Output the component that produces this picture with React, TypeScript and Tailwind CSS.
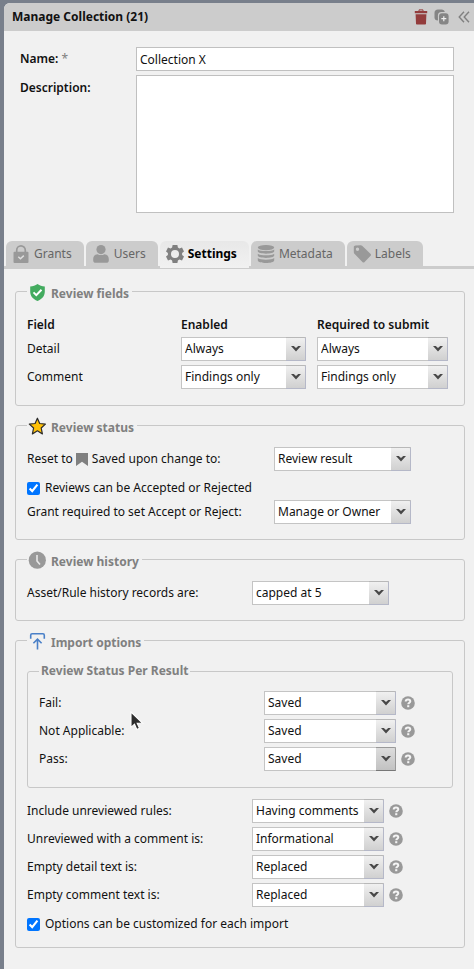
import { useId } from "react";
import type { ReactNode } from "react";

function HelpIcon() {
  return (
    <button type="button" aria-label="Help" className="mb-px ml-[5px] block size-[14px] shrink-0">
      <svg viewBox="0 0 14 14" className="block size-[14px]">
        <circle cx="7" cy="7" r="6.8" fill="#999" />
        <path d="M4.7 5.400C4.700 4 5.700 3.400 7 3.400s2.300.7 2.300 1.900c0 1.500-2 1.500-2 3" fill="none" stroke="#f4f4f4" strokeWidth="2" />
        <rect x="6.200" y="9.200" width="2.100" height="2" fill="#f4f4f4" />
      </svg>
    </button>
  );
}

type ComboProps = { id?: string; label?: string; value: string; width: string; pressed?: boolean };

function Combo({ id, label, value, width, pressed }: ComboProps) {
  const trigger = pressed
    ? "border-[#999] border-b-[#777] from-[#dcdcdc] to-[#c2c2c2]"
    : "border-[#b5b8c8] border-t-[#b8b8b8] from-[#f0f0f0] to-[#d0d0d0]";
  return (
    <span className={`relative block h-6 shrink-0 ${width}`}>
      <select
        id={id}
        aria-label={label}
        defaultValue={value}
        className="block h-6 w-full appearance-none border border-[#c4c4c4] bg-white pr-5 pl-[3px] text-[12px] leading-[22px] text-[#111] outline-none"
      >
        <option>{value}</option>
      </select>
      <span
        className={`pointer-events-none absolute top-0 right-0 flex h-6 w-5 items-center justify-center rounded-tr-[2px] border-t border-r border-b bg-linear-to-b ${trigger}`}
      >
        <svg viewBox="0 0 10 6" className="h-[6px] w-[10px]">
          <path d="M0 0h2.8L5 2 7.2 0H10L5 5.4z" fill="#484848" />
        </svg>
      </span>
    </span>
  );
}

function Row({ label, help, ...combo }: { label: ReactNode; help?: boolean; labelWidth: string } & Omit<ComboProps, "label">) {
  const id = useId();
  const { labelWidth, ...rest } = combo;
  return (
    <div className="flex h-6 items-center">
      <label htmlFor={id} className={`flex shrink-0 items-center whitespace-nowrap ${labelWidth}`}>
        {label}
      </label>
      <Combo id={id} {...rest} />
      {help && <HelpIcon />}
    </div>
  );
}

function Check({ label }: { label: string }) {
  return (
    <label className="flex h-5 items-center gap-[5px]">
      <input type="checkbox" defaultChecked className="size-[13px] accent-[#0075ff]" />
      {label}
    </label>
  );
}

function Section({ title, icon, children }: { title: string; icon: ReactNode; children: ReactNode }) {
  return (
    <fieldset className="mb-2 min-w-0 rounded-[3px] border border-[#c8c8c8] px-[11px]">
      <legend className="px-px">
        <span className="flex h-[22px] items-center gap-[5px] pt-px pr-[2px] font-bold text-[#808080]">
          {icon}
          <span className="pt-1">{title}</span>
        </span>
      </legend>
      {children}
    </fieldset>
  );
}

const iconClass = "block size-[18px] shrink-0";

const LockIcon = (
  <svg viewBox="0 0 18 18" className={iconClass}>
    <path d="M4.7 8V5.2a4.3 4.3 0 0 1 8.6 0V8" fill="none" stroke="#999" strokeWidth="1.7" />
    <rect x="1.5" y="6.8" width="15" height="11.2" rx="1" fill="#999" />
    <path d="M6.3 11.8l2.1 2 3.4-3.2" fill="none" stroke="#ddd" strokeWidth="1.5" />
  </svg>
);
const UserIcon = (
  <svg viewBox="0 0 18 18" className={iconClass}>
    <circle cx="9" cy="4.6" r="4.6" fill="#999" />
    <path d="M1.2 14c0-3 1.8-4.6 4.4-4.8 2 1.2 4.8 1.2 6.8 0 2.6.2 4.400 1.800 4.400 4.800v1.500c0 1.500-1 2.300-2.400 2.300H3.600C2.200 17.800 1.200 17 1.200 15.500z" fill="#999" />
  </svg>
);
const GearIcon = (
  <svg viewBox="0 0 18 18" className={iconClass}>
    <path
      d="M6.600 0h4.800l.5 2.600 1.500.9L16 2.600l2 3.900-1.900 1.600v1.800l1.900 1.600-2 3.900-2.600-.9-1.500.9-.5 2.600H6.600l-.5-2.600-1.500-.9-2.600.9-2-3.900 1.900-1.600V8.100L0 6.500l2-3.900 2.600.9 1.500-.9zM9 5a4 4 0 1 0 0 8 4 4 0 0 0 0-8z"
      fill="#808080"
      fillRule="evenodd"
    />
  </svg>
);
const DatabaseIcon = (
  <svg viewBox="0 0 18 18" className={iconClass}>
    <g fill="#999">
      <ellipse cx="9" cy="2.600" rx="8.200" ry="2.600" />
      <path d="M.8 4.500c2 2.100 14.400 2.100 16.400 0v1.800c0 3.200-16.400 3.200-16.400 0z" />
      <path d="M.8 8.800c2 2.100 14.400 2.100 16.400 0v1.800c0 3.200-16.400 3.200-16.400 0z" />
      <path d="M.8 13.100c2 2.100 14.400 2.100 16.400 0v2.100c0 3.700-16.400 3.700-16.400 0z" />
    </g>
  </svg>
);
const TagIcon = (
  <svg viewBox="0 0 18 18" className={iconClass}>
    <path d="M.8 2.300C.8 1.200 1.500.6 2.500.5L7.700.2c.7 0 1.200.2 1.700.7l8 7.900c.8.800.8 1.400 0 2.200l-5.800 6c-.8.800-1.400.8-2.200 0l-8-8.300C1 8.200.8 7.700.8 7zM4.500 2.500a1.700 1.700 0 1 0 0 3.400 1.700 1.700 0 0 0 0-3.400z" fill="#999" fillRule="evenodd" />
  </svg>
);
const ShieldIcon = (
  <svg viewBox="0 0 18 18" className={iconClass}>
    <path d="M9.500 1c2.200 1.600 4.500 2.300 7.300 2.500v5c0 4.500-2.600 7.500-7.300 9.500-4.700-2-7.300-5-7.300-9.500v-5C5 3.300 7.300 2.600 9.500 1z" fill="#43ab5f" />
    <path d="M5.500 9.400l2.800 2.700 5.200-5.300" fill="none" stroke="#fff" strokeWidth="2" />
  </svg>
);
const StarIcon = (
  <svg viewBox="0 0 18 18" className={iconClass}>
    <path d="M9.400 1.200l2.300 5.300 5.700.6-4.200 3.900 1.200 5.900-5-3.100-5 3.100 1.200-5.900L1.300 7.100l5.800-.6z" fill="#ffc107" stroke="#2b2b2b" strokeWidth="1.200" strokeLinejoin="round" />
  </svg>
);
const ClockIcon = (
  <svg viewBox="0 0 18 18" className={iconClass}>
    <circle cx="9.300" cy="9.200" r="8.600" fill="#999" />
    <path d="M9 3.900v6l3 3.500" fill="none" stroke="#e8e8e8" strokeWidth="1.600" />
  </svg>
);
const ImportIcon = (
  <svg viewBox="0 0 18 18" className={iconClass}>
    <path d="M2.700 6.800V3.200c0-1 .4-1.500 1.400-1.500h10.800c1 0 1.400.5 1.400 1.500v3.600M9.500 17.400V7.400M5.400 11.200l4.100-4.100 4.100 4.100" fill="none" stroke="#4a80c8" strokeWidth="1.600" />
  </svg>
);

const tabs = [
  { name: "Grants", icon: LockIcon },
  { name: "Users", icon: UserIcon },
  { name: "Settings", icon: GearIcon, active: true },
  { name: "Metadata", icon: DatabaseIcon },
  { name: "Labels", icon: TagIcon },
];

const fields = [
  { name: "Detail", value: "Always" },
  { name: "Comment", value: "Findings only" },
];

export default function App() {
  return (
    <div className="min-h-screen bg-[#787f8b] pt-[3px] pl-1 font-['Noto_Sans',sans-serif] text-[12px] leading-5 text-[#111]">
      <main className="min-h-[calc(100vh-3px)] overflow-hidden rounded-tl-[6px] bg-[#f1f1f1]">
        <header className="flex h-7 items-center bg-[#ccc] pr-1 pl-2">
          <h1 className="flex-1 text-[12px] font-bold">Manage Collection (21)</h1>
          <button type="button" aria-label="Delete" className="mr-[6px]">
            <svg viewBox="0 0 14 16" className="block h-4 w-[14px]">
              <path d="M5 2.300V.9h4v1.400" fill="none" stroke="#933c3c" strokeWidth="1" />
              <path d="M.8 2h12.400v2.200H.8z" fill="#933c3c" />
              <path d="M1.600 5.200h10.800l-.4 9.300c0 .7-.5 1.100-1.100 1.100H3.100c-.6 0-1.100-.4-1.100-1.100z" fill="#933c3c" />
            </svg>
          </button>
          <button type="button" aria-label="Clone" className="mr-[9px]">
            <svg viewBox="0 0 15 16" className="block h-4 w-[15px]">
              <path d="M4 11.500C1.700 11.500.5 10.500.5 8.500V4C.5 1.700 1.700.5 4 .5h3.500c2 0 3 .9 3.300 2.500H7.500C5 3 3.900 4.300 3.900 6.700z" fill="#858585" />
              <rect x="5" y="4.200" width="9.600" height="11.300" rx="3" fill="#858585" />
              <path d="M9.800 7.200v5M7.300 9.700h5" stroke="#eee" strokeWidth="1.200" />
            </svg>
          </button>
          <button type="button" aria-label="Collapse">
            <svg viewBox="0 0 12 12" className="block size-3">
              <path d="M6 .8L1.200 6 6 11.200M11 .8L6.200 6l4.800 5.200" fill="none" stroke="#808080" strokeWidth="1.400" />
            </svg>
          </button>
        </header>

        <div className="grid grid-cols-[116px_1fr] gap-y-1 pt-4 pr-5 pl-4">
          <label htmlFor="name" className="pt-[2px] font-semibold">
            Name: <span className="font-normal text-[#808080]">*</span>
          </label>
          <input id="name" defaultValue="Collection X" className="h-6 min-w-0 border border-[#c0c0c0] bg-white px-[3px] outline-none" />
          <label htmlFor="description" className="pt-[3px] font-semibold">
            Description:
          </label>
          <textarea id="description" className="h-[138px] min-w-0 resize-none border border-[#c0c0c0] bg-white px-[3px] outline-none" />
        </div>

        <nav role="tablist" className="mt-7 flex h-7 items-start gap-[2px] bg-linear-to-t from-[#ccc] from-[3px] to-transparent to-[3px] pl-[2px]">
          {tabs.map((tab) => (
            <button
              key={tab.name}
              type="button"
              role="tab"
              aria-selected={!!tab.active}
              className={
                tab.active
                  ? "flex h-[27px] items-center gap-1 rounded-t-[6px] bg-linear-to-b from-[#e8e8e8] to-[#f1f1f1] pr-3 pb-px pl-[6px] font-bold text-black"
                  : "flex h-[27px] items-center gap-1 rounded-t-[6px] bg-[#ccc] pr-3 pb-px pl-[6px] text-[#666]"
              }
            >
              {tab.icon}
              {tab.name}
            </button>
          ))}
        </nav>

        <form className="pt-[11px] pr-[9px] pl-[11px]">
          <Section title="Review fields" icon={ShieldIcon}>
            <table className="mt-[13px] mb-3 table-fixed border-collapse text-left">
              <thead>
                <tr className="h-[22px] align-top">
                  <th className="w-[154px] p-0 font-semibold">Field</th>
                  <th className="w-[136px] p-0 font-semibold">Enabled</th>
                  <th className="w-[131px] p-0 font-semibold">Required to submit</th>
                </tr>
              </thead>
              <tbody>
                {fields.map((field) => (
                  <tr key={field.name} className="h-7 align-top">
                    <td className="p-0 pt-[2px]">{field.name}</td>
                    <td className="p-0">
                      <Combo label={`${field.name} enabled`} value={field.value} width="w-[125px]" />
                    </td>
                    <td className="p-0">
                      <Combo label={`${field.name} required to submit`} value={field.value} width="w-[131px]" />
                    </td>
                  </tr>
                ))}
              </tbody>
            </table>
          </Section>

          <Section title="Review status" icon={StarIcon}>
            <div className="pt-[11px] pb-[15px]">
              <Row
                labelWidth="w-[247px]"
                width="w-[137px]"
                value="Review result"
                label={
                  <>
                    Reset to
                    <svg viewBox="0 0 12 13" className="mr-1 ml-[3px] h-[13px] w-3">
                      <path d="M0 0h12v13L6 8.800 0 13z" fill="#808080" />
                    </svg>
                    Saved upon change to:
                  </>
                }
              />
              <div className="pt-[7px] pb-[2px]">
                <Check label="Reviews can be Accepted or Rejected" />
              </div>
              <Row labelWidth="w-[247px]" width="w-[137px]" value="Manage or Owner" label="Grant required to set Accept or Reject:" />
            </div>
          </Section>

          <Section title="Review history" icon={ClockIcon}>
            <div className="pt-[11px] pb-[15px]">
              <Row labelWidth="w-[225px]" width="w-[137px]" value="capped at 5" label="Asset/Rule history records are:" />
            </div>
          </Section>

          <Section title="Import options" icon={ImportIcon}>
            <fieldset className="relative mt-[10px] min-w-0 rounded-[3px] border border-[#c8c8c8] px-[11px]">
              <legend className="px-[2px] font-bold text-[#808080]">Review Status Per Result</legend>
              <div className="flex flex-col gap-1 pt-[10px] pb-4">
                <Row help labelWidth="w-[225px]" width="w-[132px]" value="Saved" label="Fail:" />
                <Row help labelWidth="w-[225px]" width="w-[132px]" value="Saved" label="Not Applicable:" />
                <Row help pressed labelWidth="w-[225px]" width="w-[132px]" value="Saved" label="Pass:" />
              </div>
              <svg viewBox="0 0 14 20" className="pointer-events-none absolute top-[30px] left-[102px] h-5 w-[14px]">
                <path d="M1 1v15.500l3.500-3.300 2.300 5.300 2.700-1.200-2.300-5.100H12.500z" fill="#2e2e2e" stroke="#fff" strokeWidth="1.100" />
              </svg>
            </fieldset>
            <div className="flex flex-col gap-1 pt-[11px] pb-[13px]">
              <Row help labelWidth="w-[225px]" width="w-[132px]" value="Having comments" label="Include unreviewed rules:" />
              <Row help labelWidth="w-[225px]" width="w-[132px]" value="Informational" label="Unreviewed with a comment is:" />
              <Row help labelWidth="w-[225px]" width="w-[132px]" value="Replaced" label="Empty detail text is:" />
              <Row help labelWidth="w-[225px]" width="w-[132px]" value="Replaced" label="Empty comment text is:" />
              <div className="pt-[3px]">
                <Check label="Options can be customized for each import" />
              </div>
            </div>
          </Section>
        </form>
      </main>
    </div>
  );
}
